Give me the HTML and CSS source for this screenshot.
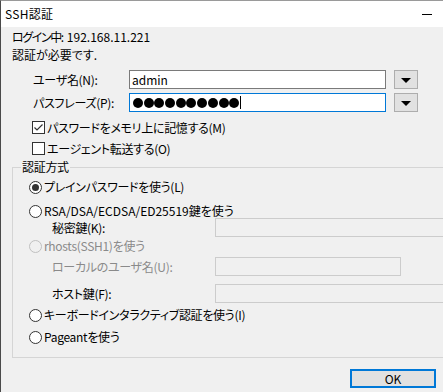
FILE: index.html
```html
<!DOCTYPE html>
<html lang="ja">
<head>
<meta charset="utf-8">
<title>SSH認証</title>
<link rel="stylesheet" href="styles.css">
</head>
<body>
<div class="window">
  <div class="titlebar">
    <span class="title">SSH認証</span>
    <span class="min"></span>
  </div>
  <div class="content">
    <div class="line"><span class="cond">ログイン中</span>: 192.168.11.221</div>
    <div class="line">認証が必要です.</div>

    <div class="field-row first">
      <span class="field-label">ユーザ名(N):</span>
      <div class="input">admin</div>
      <div class="dd"><span class="tri"></span></div>
    </div>
    <div class="field-row">
      <span class="field-label">パスフレーズ(P):</span>
      <div class="input focus">
        <span class="dots"><i></i><i></i><i></i><i></i><i></i><i></i><i></i><i></i><i></i><i></i></span><span class="caret"></span>
      </div>
      <div class="dd"><span class="tri"></span></div>
    </div>

    <div class="check-row first">
      <span class="cb"><svg width="11" height="11" viewBox="0 0 11 11"><polyline points="1.5,5.5 4,8 9.5,2.5" fill="none" stroke="#333" stroke-width="1.2"/></svg></span>
      <span>パスワードをメモリ上に記憶する(M)</span>
    </div>
    <div class="check-row">
      <span class="cb"></span>
      <span>エージェント転送する(O)</span>
    </div>

    <div class="group">
      <div class="group-title">認証方式</div>
      <div class="radio-row r1"><span class="rb on"></span><span>プレインパスワードを使う(L)</span></div>
      <div class="radio-row r2"><span class="rb"></span><span class="latin">RSA/DSA/ECDSA/ED25519鍵を使う</span></div>
      <div class="sub-row key">
        <span class="sub-label">秘密鍵(K):</span>
        <div class="dis-input wide"></div>
      </div>
      <div class="radio-row rh disabled"><span class="rb"></span><span>rhosts(SSH1)を使う</span></div>
      <div class="sub-row local">
        <span class="sub-label disabled">ローカルのユーザ名(U):</span>
        <div class="dis-input narrow"></div>
      </div>
      <div class="sub-row host">
        <span class="sub-label">ホスト鍵(F):</span>
        <div class="dis-input wide"></div>
      </div>
      <div class="radio-row kb"><span class="rb"></span><span>キーボードインタラクティブ認証を使う(I)</span></div>
      <div class="radio-row pa"><span class="rb"></span><span>Pageantを使う</span></div>
    </div>

    <div class="footer">
      <button class="ok">OK</button>
    </div>
  </div>
</div>
</body>
</html>
```

FILE: styles.css
```css
html, body {
  margin: 0;
  padding: 0;
  background: #f0f0f0;
  overflow: hidden;
}
body {
  width: 443px;
  height: 392px;
  font-family: "Noto Sans CJK JP", "Noto Sans", sans-serif;
  font-feature-settings: "palt";
  font-size: 12px;
  letter-spacing: -0.3px;
  color: #000;
}
.window {
  width: 443px;
  height: 392px;
  border-top: 1px solid #9a9a9a;
  border-left: 1px solid #4a4a4a;
  background: #f0f0f0;
  box-sizing: border-box;
  overflow: hidden;
}
.titlebar {
  height: 26px;
  background: #fff;
  display: flex;
  align-items: center;
  padding-left: 4px;
  letter-spacing: 0.3px;
}
.title {
  line-height: 16px;
}
.min {
  width: 10px;
  height: 1px;
  background: #000;
  margin-left: 369px;
  margin-top: 1px;
}
.content {
  padding: 1px 0 0 11px;
}
.line {
  line-height: 18px;
  height: 18px;
  letter-spacing: 0;
}
.cond {
  letter-spacing: -1.4px;
}
.latin {
  letter-spacing: 0;
}
.field-row {
  display: flex;
  align-items: center;
  height: 19px;
  margin-top: 4px;
  padding-left: 21px;
}
.field-row.first {
  margin-top: 6px;
}
.field-label {
  width: 96px;
  line-height: 16px;
}
.input {
  width: 257px;
  height: 19px;
  box-sizing: border-box;
  border: 1px solid #7a7a7a;
  background: #fff;
  padding-left: 2px;
  line-height: 16px;
  display: flex;
  align-items: center;
  letter-spacing: 0;
}
.input.focus {
  border-color: #0078d7;
}
.dots {
  display: flex;
  gap: 0.7px;
  margin-left: 1px;
}
.dots i {
  display: block;
  width: 10px;
  height: 10px;
  border-radius: 50%;
  background: #000;
}
.caret {
  width: 1px;
  height: 13px;
  background: #000;
  margin-left: 1px;
}
.dd {
  width: 24px;
  height: 19px;
  box-sizing: border-box;
  margin-left: 8px;
  background: #e1e1e1;
  border: 1px solid #adadad;
  display: flex;
  align-items: center;
  justify-content: center;
}
.tri {
  width: 0;
  height: 0;
  border-left: 5px solid transparent;
  border-right: 5px solid transparent;
  border-top: 5px solid #000;
  margin-top: 1px;
}
.check-row {
  display: flex;
  align-items: center;
  height: 21px;
  padding-left: 20px;
  line-height: 16px;
}
.check-row.first {
  margin-top: 5px;
}
.cb {
  width: 13px;
  height: 13px;
  box-sizing: border-box;
  border: 1px solid #333;
  background: #fff;
  margin-right: 2px;
  display: flex;
  align-items: center;
  justify-content: center;
}
.cb svg {
  display: block;
}
.group {
  margin-top: 8px;
  border: 1px solid #d5d5d5;
  border-right: none;
  padding: 0 0 12px 16px;
}
.group-title {
  display: table;
  margin: -9px 0 0 -8px;
  padding: 0 1px;
  line-height: 16px;
  background: #f0f0f0;
}
.radio-row {
  display: flex;
  align-items: center;
  height: 16px;
  line-height: 16px;
}
.r1 { margin-top: 4px; }
.r2 { margin-top: 8px; }
.rh { margin-top: 1px; }
.kb { margin-top: 4px; }
.pa { margin-top: 6px; }
.rb {
  width: 13px;
  height: 13px;
  box-sizing: border-box;
  border: 1px solid #333;
  border-radius: 50%;
  background: #fff;
  margin-right: 2px;
  display: flex;
  align-items: center;
  justify-content: center;
}
.rb.on::after {
  content: "";
  width: 7px;
  height: 7px;
  border-radius: 50%;
  background: #333;
}
.radio-row.disabled {
  color: #8a8a8a;
}
.radio-row.disabled .rb {
  border-color: #c0c0c0;
  background: #f0f0f0;
}
.sub-row {
  display: flex;
  align-items: center;
  height: 19px;
  padding-left: 23px;
}
.sub-row.key { margin-top: -1px; }
.sub-row.local { margin-top: 3px; }
.sub-row.host { margin-top: 8px; }
.sub-label {
  width: 163px;
  line-height: 16px;
}
.sub-label.disabled {
  color: #8a8a8a;
}
.dis-input {
  height: 19px;
  box-sizing: border-box;
  border: 1px solid #cccccc;
  background: #f0f0f0;
}
.dis-input.wide {
  flex: 1;
  border-right: none;
}
.dis-input.narrow {
  width: 186px;
}
.footer {
  padding: 11px 0 0 338px;
}
.ok {
  display: block;
  width: 86px;
  height: 19px;
  box-sizing: border-box;
  border: 2px solid #0078d7;
  background: #e1e1e1;
  font-family: inherit;
  font-size: 12px;
  line-height: 13px;
  padding: 0;
  color: #000;
  letter-spacing: 0;
}
```
